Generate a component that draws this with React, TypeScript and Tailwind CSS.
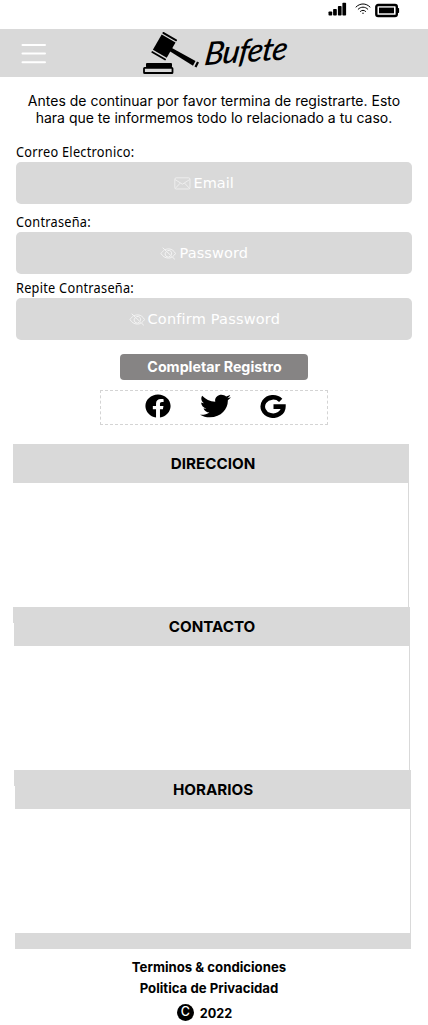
import type { ReactNode } from "react";
import { FaFacebook, FaTwitter } from "react-icons/fa";

function StatusBar() {
  return (
    <div className="flex h-[29px] items-start">
      <svg className="ml-[328px] mt-[2px]" width="19" height="14" viewBox="0 0 19 14">
        <rect x="0.5" y="9.5" width="3.7" height="4" rx="0.8" />
        <rect x="5.1" y="7" width="3.7" height="6.5" rx="0.8" />
        <rect x="9.9" y="4" width="3.7" height="9.5" rx="0.8" />
        <rect x="14.4" y="0.7" width="3.7" height="12.8" rx="0.8" />
      </svg>
      <svg className="ml-[8px] mt-[3px]" width="16" height="12" viewBox="0 0 16 12" fill="none" stroke="#000" strokeWidth="1" strokeLinecap="round">
        <path d="M1 4C5-.1 11-.1 15 4M3.2 6.2c2.8-2.8 6.800-2.8 9.600 0M5.400 8.400c1.600-1.500 3.600-1.500 5.200 0" />
        <circle cx="8" cy="10.300" r=".7" fill="#000" stroke="none" />
      </svg>
      <svg className="ml-[4px] mt-[3px]" width="25" height="15" viewBox="0 0 25 15">
        <rect x="1.300" y="2" width="20.500" height="11" rx="1.800" fill="none" stroke="#000" strokeWidth="2.400" />
        <rect x="4" y="4.600" width="15" height="5.700" />
        <rect x="22.500" y="5" width="1.600" height="5" rx=".7" />
      </svg>
    </div>
  );
}

function Gavel() {
  return (
    <svg width="60" height="45" viewBox="0 0 60 45">
      <g transform="translate(22.200 15.200) rotate(30)">
        <rect x="-8" y="-8.800" width="16" height="17.600" />
        <rect x="-8.200" y="-12" width="16.400" height="1.900" rx=".7" />
        <rect x="-8.200" y="10.100" width="16.400" height="1.900" rx=".7" />
      </g>
      <path d="M29 16.500 53.500 30l-2.500 4.800L27 19.800Z" />
      <path d="m55 30.500 2 1-2.500 5-2-1Z" />
      <rect x="4" y="32" width="26" height="4.500" rx="1" />
      <rect x="2" y="36.800" width="28.500" height="5.200" rx=".6" fill="none" stroke="#000" strokeWidth="1.800" />
    </svg>
  );
}

function Header() {
  return (
    <header className="flex h-12 items-start bg-[#d9d9d9]">
      <svg className="ml-[21px] mt-[14px]" width="26" height="22" viewBox="0 0 26 22" stroke="#fff" strokeWidth="2" strokeLinecap="round">
        <path d="M1.500 2h22.500M1.500 10.600h22.500M1.500 19.300h22.500" />
      </svg>
      <div className="ml-[95px] mt-[2px] flex">
        <Gavel />
        <span className="ml-[3px] mt-px origin-left -rotate-4 -skew-x-12 font-[Lato,cursive] text-[32px] leading-[42px] font-medium tracking-[-0.900px] italic">
          Bufete
        </span>
      </div>
    </header>
  );
}

function MailIcon() {
  return (
    <svg className="mt-[2px] text-[#f0f0f0]" width="17" height="13" viewBox="0 0 17 13" fill="none" stroke="currentColor" strokeWidth=".9">
      <rect x=".8" y=".8" width="15.200" height="11.200" rx="1.500" />
      <path d="m1 2.500 7.400 4.700 7.400-4.700M1.300 11.300l5-5.200M15.500 11.300l-5-5.200" />
    </svg>
  );
}

function HiddenIcon() {
  return (
    <svg className="mt-[2px] text-[#f4f4f4]" width="17" height="13" viewBox="0 0 17 13" fill="none" stroke="currentColor" strokeWidth="1" strokeLinecap="round">
      <path d="M5.500 2.500C7 2 8 1.800 9 1.900c3 .1 5.200 2.200 6.500 4.600-.7 1.200-1.500 2.100-2.500 2.900M4 3.400C2.700 4.200 1.700 5.300 1 6.500c1.500 2.600 4 4.600 7.500 4.600 1 0 2-.2 2.900-.6M6 4.800a3.100 3.100 0 0 0 4.400 4.400M7.700 3.500a3.100 3.100 0 0 1 3.900 3.900M3 1l11.500 11" />
    </svg>
  );
}

type FieldProps = {
  label: string;
  placeholder: string;
  icon: ReactNode;
  offset: string;
};

function Field({ label, placeholder, icon, offset }: FieldProps) {
  return (
    <div className="mx-4">
      <div className='origin-left scale-x-[.91] font-["Noto_Sans",sans-serif] text-[14px] leading-[18px] tracking-[0.280px] whitespace-nowrap'>
        {label}
      </div>
      <div className="mt-[0.5px] flex h-[42.500px] items-center rounded-[5px] bg-[#d9d9d9]">
        <div className={`flex items-center font-["DejaVu_Sans",sans-serif] text-[14.500px] leading-5 text-white ${offset}`}>
          {icon}
          <span className="whitespace-nowrap">{placeholder}</span>
        </div>
      </div>
    </div>
  );
}

type SectionProps = { title: string; className: string; titleClass: string };

function Section({ title, className, titleClass }: SectionProps) {
  return (
    <section className={`h-[179px] w-[396px] bg-[#d9d9d9] ${className}`}>
      <h2 className="flex h-[39px] items-center justify-center pt-[2px] text-[15.200px] font-bold">
        <span className={titleClass}>{title}</span>
      </h2>
      <div className="h-[124px] w-[395px] bg-white" />
    </section>
  );
}

export default function App() {
  return (
    <main className='h-[1025px] w-[428px] overflow-hidden bg-white font-["Inter",sans-serif] text-black'>
      <StatusBar />
      <Header />
      <p className="pt-[15px] text-center text-[14px] leading-[17px]">
        Antes de continuar por favor termina de registrarte. Esto
        <br />
        hara que te informemos todo lo relacionado a tu caso.
      </p>
      <div className="pt-[17px]">
        <Field label="Correo Electronico:" placeholder="Email" icon={<MailIcon />} offset="ml-[158px] gap-[2.500px]" />
      </div>
      <div className="pt-[9px]">
        <Field label="Contraseña:" placeholder="Password" icon={<HiddenIcon />} offset="ml-[144px] gap-[2.500px] tracking-[0.100px]" />
      </div>
      <div className="pt-[5px]">
        <Field label="Repite Contraseña:" placeholder="Confirm Password" icon={<HiddenIcon />} offset="ml-[113px] gap-[1.500px] tracking-[0.190px]" />
      </div>
      <button className="mt-[14px] ml-[120px] flex h-[26px] w-[188px] items-center justify-center rounded-[4px] bg-[#868484] pl-px text-[14.250px] font-bold text-white">
        Completar Registro
      </button>
      <div className="mt-[10px] ml-[100px] flex h-[35px] w-[228px] items-start border border-dashed border-[#d4d4d4]">
        <FaFacebook className="mt-[3px] ml-[44px] h-6 w-[26px]" preserveAspectRatio="none" />
        <FaTwitter className="mt-[1px] ml-[29px] h-7 w-[31px]" preserveAspectRatio="none" />
        <svg className="mt-[4px] ml-[29px]" width="26" height="23" viewBox="0 0 26 23" fill="none" stroke="#000" strokeWidth="4.600">
          <path d="M20.700 5.300A10.300 9.200 0 1 0 23.400 11.600H13.500" />
        </svg>
      </div>
      <Section title="DIRECCION" className="mt-[19px] ml-[13px]" titleClass="mr-[-4px]" />
      <Section title="CONTACTO" className="mt-[-16px] ml-[14px]" titleClass="mr-0" />
      <Section title="HORARIOS" className="mt-[-16px] ml-[15px]" titleClass="mr-0" />
      <footer className="flex flex-col pt-2 pr-[10px] text-center text-[13.200px] leading-[21px] font-bold">
        <span>Terminos &amp; condiciones</span>
        <span>Politica de Privacidad</span>
        <span className="mt-1 flex items-center justify-center gap-[6px] pr-[9px] text-[12.700px]">
          <span className="mt-[-2px] flex size-[17px] items-center justify-center rounded-full bg-black text-[12.500px] leading-none font-medium text-white">C</span>
          2022
        </span>
      </footer>
    </main>
  );
}
